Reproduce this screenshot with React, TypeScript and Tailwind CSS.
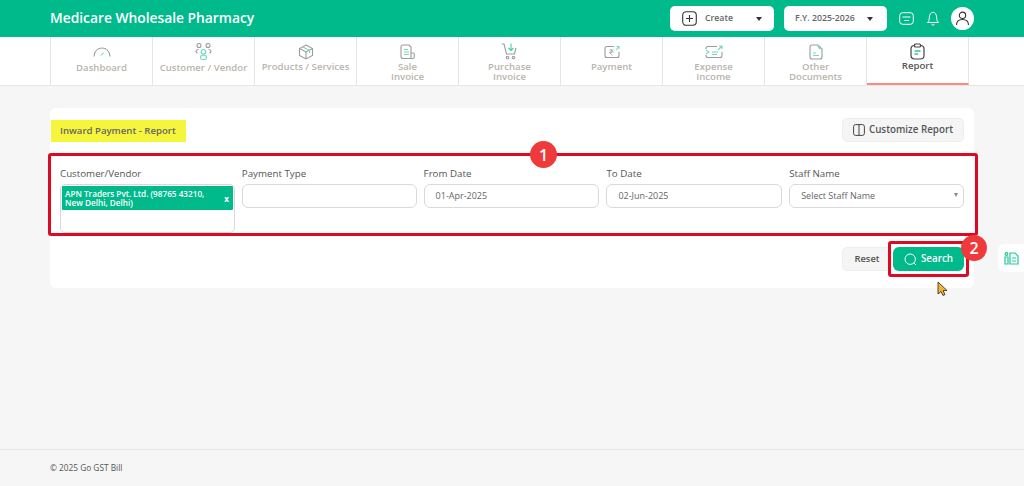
import React from "react";

const G = "#6fdcc0";
const S = "#9c9c9c";

function Tab({ label, icon, active, shift }: { label: React.ReactNode; icon: React.ReactNode; active?: boolean; shift?: string }) {
  return (
    <div
      className={`w-[102px] h-full shrink-0 border-r border-[#e6e6e6] flex flex-col items-center pt-[5px] text-[9.6px] leading-[10px] font-semibold text-center ${
        active ? "border-b-2 border-b-[#ff8a80] text-[#555]" : "text-[#b9b5ae]"
      }`}
    >
      <div className="h-[19px] flex items-center justify-center">{icon}</div>
      <div className={shift ?? "mt-[1px]"}>{label}</div>
    </div>
  );
}

function Field({ label, children, className }: { label: string; children: React.ReactNode; className?: string }) {
  return (
    <div className={className}>
      <div className="text-[9.75px] leading-[14px] text-[#555] mb-[3px]">{label}</div>
      {children}
    </div>
  );
}

function DateBox({ value }: { value: string }) {
  return (
    <div className="h-[24px] border border-[#d9d9d9] rounded-[6px] bg-white flex items-center pl-[11px] text-[9px] text-[#666]">
      {value}
    </div>
  );
}

export default function App() {
  return (
    <div className="w-[1024px] h-[486px] overflow-hidden relative bg-[#f6f6f6] flex flex-col font-['Open_Sans',sans-serif]">
      {/* Header */}
      <div className="h-[37px] bg-[#00ba8b] flex items-center pl-[50px] pr-[50px] shrink-0">
        <div className="text-white text-[13.8px] font-semibold grow">Medicare Wholesale Pharmacy</div>
        <div className="w-[104px] h-[25px] bg-white rounded-[5px] flex items-center pl-[12px] pr-[12px]">
          <svg width="15" height="15" viewBox="0 0 15 15" fill="none" stroke="#333" strokeWidth="1.1">
            <rect x="0.7" y="0.7" width="13.6" height="13.6" rx="3.5" />
            <path d="M7.5 4v7M4 7.5h7" />
          </svg>
          <span className="ml-[8px] text-[8.75px] font-semibold text-[#666] grow">Create</span>
          <span className="w-0 h-0 border-x-[3.5px] border-x-transparent border-t-[4px] border-t-[#333]" />
        </div>
        <div className="w-[103px] h-[25px] bg-white rounded-[5px] flex items-center pl-[11px] pr-[14px] ml-[10px]">
          <span className="text-[8.75px] font-semibold text-[#666] grow">F.Y. 2025-2026</span>
          <span className="w-0 h-0 border-x-[3.5px] border-x-transparent border-t-[4px] border-t-[#333]" />
        </div>
        <svg className="ml-[12px]" width="15" height="13" viewBox="0 0 15 13" fill="none" stroke="white" strokeWidth="1">
          <rect x="0.7" y="0.7" width="13.6" height="11.6" rx="3" />
          <path d="M3.5 5h8M5 8.5h5" />
        </svg>
        <svg className="ml-[12px]" width="14" height="15" viewBox="0 0 14 15" fill="none" stroke="white" strokeWidth="1">
          <path d="M1.5 11.500c1-1 1.800-2 1.800-5C3.300 3.500 5 1.300 7 1.300s3.700 2.200 3.700 5.200c0 3 .8 4 1.800 5z" />
          <path d="M5.500 13.300c.5 1 2.500 1 3 0" />
        </svg>
        <div className="ml-[11px] w-[23px] h-[23px] rounded-full bg-white flex items-center justify-center">
          <svg width="15" height="15" viewBox="0 0 15 15" fill="none" stroke="#333" strokeWidth="1.1">
            <circle cx="7.500" cy="4.300" r="3.200" />
            <path d="M1.500 14c0-4 2.500-5.500 6-5.500s6 1.500 6 5.500" />
          </svg>
        </div>
      </div>

      {/* Nav */}
      <div className="h-[49px] bg-white border-b border-[#e6e6e6] pl-[50px] flex shrink-0">
        <div className="flex h-full border-l border-[#e6e6e6]">
          <Tab
            label="Dashboard"
            shift="mt-[2px]"
            icon={
              <svg width="18" height="10" viewBox="0 0 18 10" fill="none" strokeWidth="1.100">
                <path d="M1 9.500C1.500 4 5 1 9 1s7.500 3 8 8.500" stroke={S} />
                <path d="M8 8.500l2.500-3" stroke={G} />
              </svg>
            }
          />
          <Tab
            label="Customer / Vendor"
            shift="mt-[2px]"
            icon={
              <svg width="17" height="17" viewBox="0 0 17 17" fill="none" strokeWidth="1.100">
                <circle cx="4" cy="2.500" r="2" stroke={S} />
                <circle cx="13" cy="2.500" r="2" stroke={S} />
                <path d="M3.500 6.500C1 6.500 0 9 2.500 10M13.500 6.500c2.500 0 3.500 2.500 1 3.500" stroke={S} />
                <circle cx="8.500" cy="8.800" r="2.300" stroke={G} />
                <rect x="5.500" y="12.300" width="6" height="4.200" rx="2.100" stroke={G} />
              </svg>
            }
          />
          <Tab
            label="Products / Services"
            icon={
              <svg width="16" height="16" viewBox="0 0 16 16" fill="none" strokeWidth="1.100">
                <path d="M8 1l6.500 3.500v7L8 15l-6.500-3.500v-7z" stroke={S} />
                <path d="M1.500 4.500L8 8l6.500-3.500M8 8v7" stroke={S} />
                <path d="M5 3l6.500 3.500V9" stroke={G} />
              </svg>
            }
          />
          <Tab
            label={<>Sale<br />Invoice</>}
            icon={
              <svg width="15" height="16" viewBox="0 0 15 16" fill="none" strokeWidth="1.100">
                <path d="M11 14.500H3c-1 0-2-1-2-2V3c0-1 1-2 2-2h6l2 2z" stroke={S} />
                <path d="M11 9h2c.8 0 1.300.5 1.300 1.500v2.500c0 1-.8 1.500-1.500 1.500H11" stroke={S} />
                <path d="M4 5.500h4M4 8h5M4 10.500h5" stroke={G} />
              </svg>
            }
          />
          <Tab
            label={<>Purchase<br />Invoice</>}
            icon={
              <svg width="17" height="17" viewBox="0 0 17 17" fill="none" strokeWidth="1.100">
                <path d="M1 1h2l2.500 10h8l1.500-6" stroke={S} />
                <circle cx="6.500" cy="14.500" r="1.300" stroke={S} />
                <circle cx="12.500" cy="14.500" r="1.300" stroke={S} />
                <path d="M10 .5v7M7.500 5l2.500 2.500L12.500 5" stroke="#3fd0aa" />
              </svg>
            }
          />
          <Tab
            label="Payment"
            icon={
              <svg width="16" height="14" viewBox="0 0 16 14" fill="none" strokeWidth="1.100">
                <path d="M10 1.500H3c-1 0-2 1-2 2v7c0 1 1 2 2 2h10c1 0 2-1 2-2V7" stroke={S} />
                <path d="M5.500 5h4M5.500 7h4M6.500 5c2.500 0 2.500 2.500 0 2.500h-1l3 3" stroke={S} strokeWidth=".8" />
                <path d="M12 5l3-3.500M12.500 1.500H15V4" stroke={G} />
              </svg>
            }
          />
          <Tab
            label={<>Expense<br />Income</>}
            icon={
              <svg width="18" height="14" viewBox="0 0 18 14" fill="none" strokeWidth="1.100">
                <path d="M12 1.500H3c-1 0-2 .8-2 2V4M1 10v.5c0 1 1 2 2 2h12c1 0 2-1 2-2V7" stroke={S} />
                <path d="M1 5l3 2-3 2M7 7h6M7 9.500h5" stroke={G} />
                <path d="M13 5l4-4M14 1h3v3" stroke={G} />
              </svg>
            }
          />
          <Tab
            label={<>Other<br />Documents</>}
            icon={
              <svg width="14" height="16" viewBox="0 0 14 16" fill="none" strokeWidth="1.100">
                <path d="M9 1H3C2 1 1 2 1 3v10c0 1 1 2 2 2h8c1 0 2-1 2-2V5z" stroke={S} />
                <path d="M9 1c0 3 1 4 4 4" stroke={G} />
                <path d="M4 9h3M4 11.500h6" stroke={G} />
              </svg>
            }
          />
          <Tab
            active
            label="Report"
            shift="mt-[0px]"
            icon={
              <svg width="15" height="17" viewBox="0 0 15 17" fill="none" strokeWidth="1.200">
                <rect x="1" y="2.500" width="13" height="13.500" rx="3.500" stroke="#444" />
                <rect x="4.500" y="1" width="6" height="3" rx="1" stroke="#444" fill="white" />
                <path d="M4.500 8h6M4.500 11h3.500" stroke="#2cc9a0" strokeWidth="1.500" />
              </svg>
            }
          />
        </div>
      </div>

      {/* Main */}
      <div className="grow pl-[50px] pr-[50px] pt-[22px]">
        <div className="w-[924px] h-[180px] bg-white rounded-[6px] flex flex-col">
          <div className="flex items-start justify-between pt-[10px] pl-[1px] pr-[10px] h-[46px] shrink-0">
            <div className="h-[22px] w-[135px] bg-[#f5f53b] flex items-center pl-[9px] text-[9.6px] font-semibold text-[#666] mt-[2px]">
              Inward Payment - Report
            </div>
            <div className="h-[24px] w-[122px] bg-[#f5f5f5] border border-[#eeeeee] rounded-[5px] flex items-center justify-center gap-[4px] text-[9.8px] font-semibold text-[#555]">
              <svg width="12" height="12" viewBox="0 0 12 12" fill="none" stroke="#444" strokeWidth="1">
                <rect x="0.600" y="0.600" width="10.800" height="10.800" rx="2" />
                <path d="M6 .6v10.800" />
              </svg>
              Customize Report
            </div>
          </div>

          <div className="flex gap-[7px] pl-[10px] pr-[10px] pt-[13px] h-[79px] shrink-0">
            <Field label="Customer/Vendor" className="w-[175px]">
              <div className="h-[49px] border border-[#d9d9d9] rounded-[5px] p-[1px]">
                <div className="h-[24px] bg-[#00ba8b] rounded-[1px] flex items-center pl-[3px] pr-[4px] text-white text-[8.2px] leading-[9px] font-semibold">
                  <span className="grow">APN Traders Pvt. Ltd. (98765 43210,<br />New Delhi, Delhi)</span>
                  <span className="text-[8px] font-bold">x</span>
                </div>
              </div>
            </Field>
            <Field label="Payment Type" className="w-[175px]">
              <div className="h-[24px] border border-[#d9d9d9] rounded-[6px] bg-white" />
            </Field>
            <Field label="From Date" className="w-[176px]">
              <DateBox value="01-Apr-2025" />
            </Field>
            <Field label="To Date" className="w-[176px]">
              <DateBox value="02-Jun-2025" />
            </Field>
            <Field label="Staff Name" className="w-[175px]">
              <div className="h-[24px] border border-[#d9d9d9] rounded-[6px] bg-white flex items-center pl-[11px] pr-[5px] text-[9px] text-[#666]">
                <span className="grow">Select Staff Name</span>
                <span className="w-0 h-0 border-x-[2.500px] border-x-transparent border-t-[4px] border-t-[#888] mb-[2px]" />
              </div>
            </Field>
          </div>

          <div className="flex justify-end items-center gap-[1px] pr-[10px] pt-[14px]">
            <div className="h-[24px] w-[50px] bg-[#f5f5f5] border border-[#eeeeee] rounded-[5px] flex items-center justify-center text-[9.4px] font-semibold text-[#555]">
              Reset
            </div>
            <div className="h-[24px] w-[71px] bg-[#00ba8b] rounded-[6px] flex items-center justify-center gap-[4px] text-[9.8px] font-semibold text-white">
              <svg width="13" height="13" viewBox="0 0 13 13" fill="none" stroke="white" strokeWidth="1">
                <circle cx="6.200" cy="6.200" r="5.200" />
                <path d="M10 10l2 2" />
              </svg>
              Search
            </div>
          </div>
        </div>
      </div>

      {/* Footer */}
      <div className="h-[37px] border-t border-[#e5e5e5] pl-[50px] flex items-center text-[8.3px] text-[#555] shrink-0">
        © 2025 Go GST Bill
      </div>

      {/* Side widget */}
      <div className="absolute left-[998px] top-[244px] w-[26px] h-[28px] bg-white rounded-l-[6px] flex items-center justify-center">
        <svg width="15" height="13" viewBox="0 0 15 13" fill="none" stroke="#1fc79c" strokeWidth="1.200">
          <circle cx="2.500" cy="2" r="1.300" />
          <path d="M1 5h3v7H1z" />
          <path d="M6 1h5l3 3v8H6z" />
          <path d="M8 6h4M8 9h4" />
        </svg>
      </div>

      {/* Annotations */}
      <div className="absolute left-[48px] top-[153px] w-[930px] h-[83px] border-[3px] border-[#dc0a23] rounded-[3px]" />
      <div className="absolute left-[888px] top-[241px] w-[81px] h-[36px] border-[3px] border-[#dc0a23] rounded-[3px]" />
      <div className="absolute left-[530px] top-[141px] w-[27px] h-[27px] rounded-full bg-[#ee3a3a] flex items-center justify-center text-white text-[16px] font-semibold">1</div>
      <div className="absolute left-[961px] top-[235px] w-[26px] h-[26px] rounded-full bg-[#ee3a3a] flex items-center justify-center text-white text-[16px] font-semibold">2</div>
      <svg className="absolute left-[937px] top-[281px]" width="12" height="16" viewBox="0 0 12 16">
        <path d="M1 1l0 12 3-2.500 2 4 2-1-2-3.800 4-.2z" fill="#f2b632" stroke="#222" strokeWidth="0.800" />
      </svg>
    </div>
  );
}
